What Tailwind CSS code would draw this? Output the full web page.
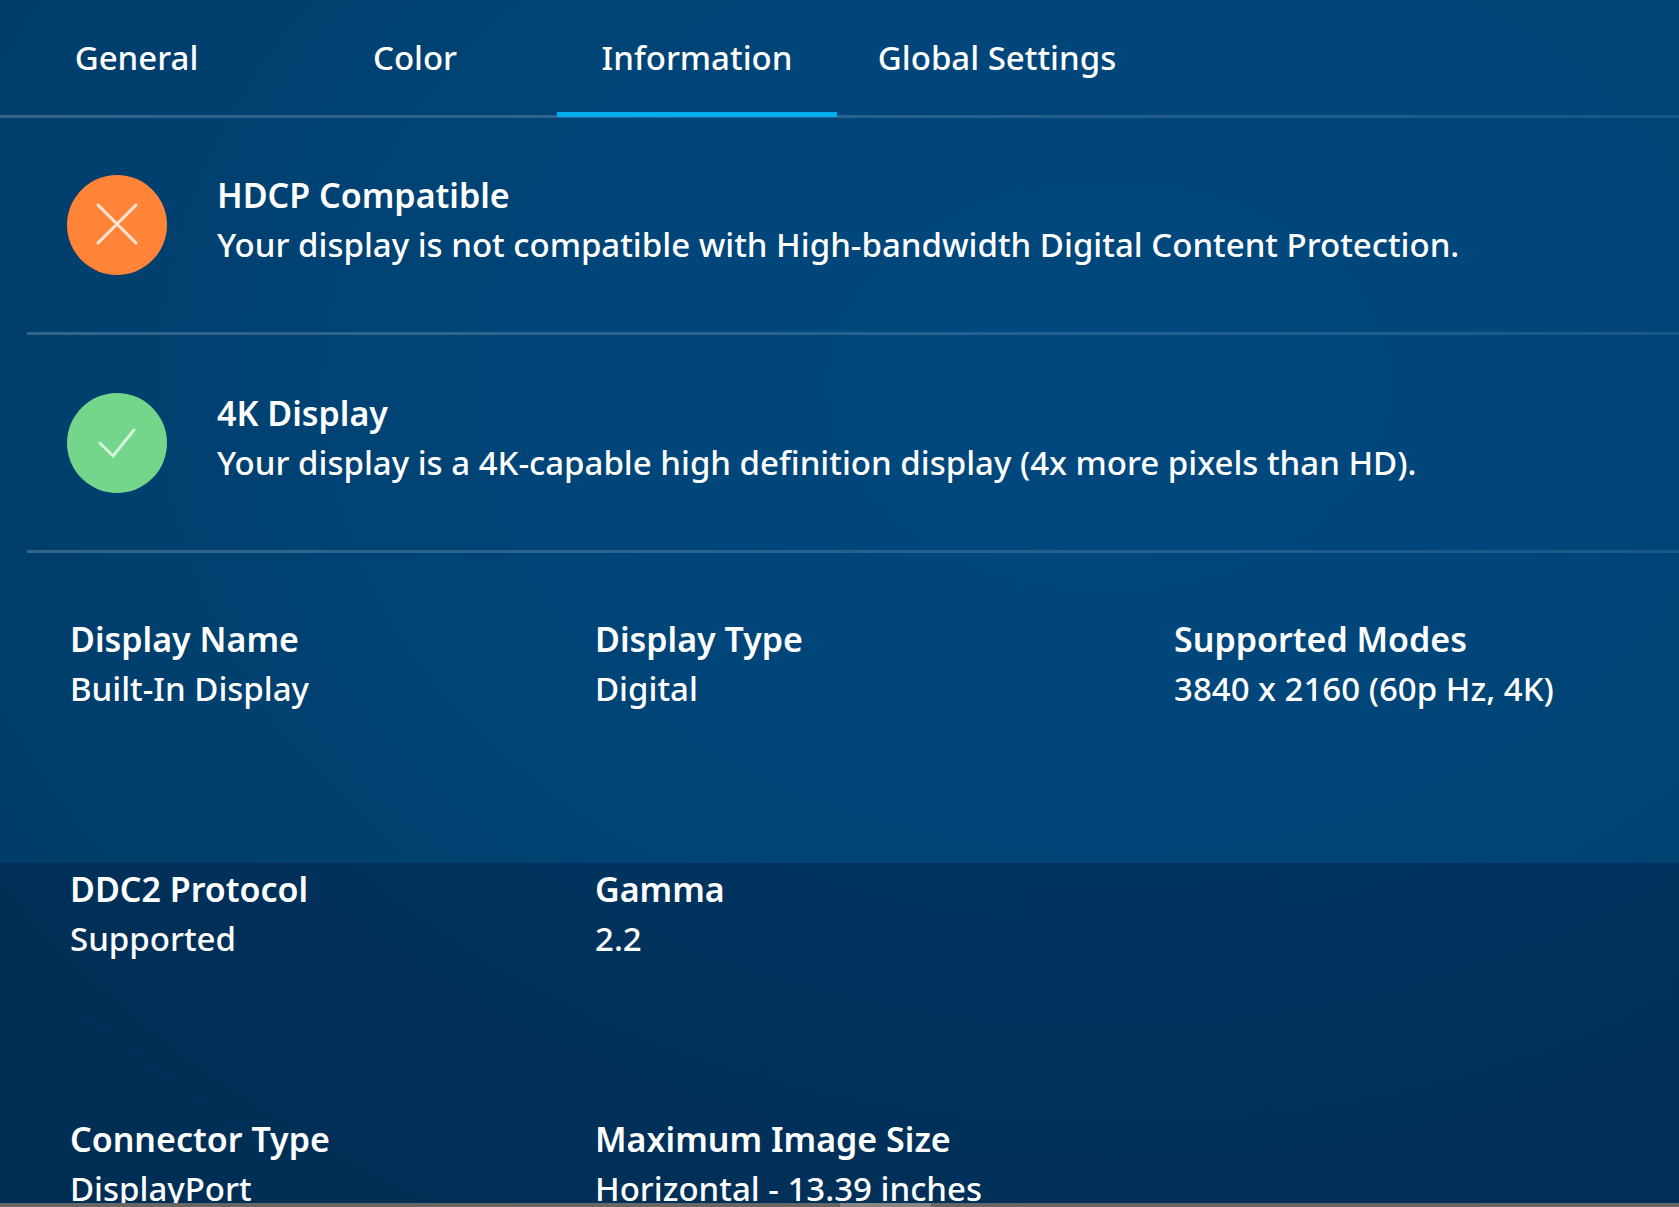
<!DOCTYPE html>
<html lang="en">
  <head>
    <meta charset="UTF-8" />
    <meta name="viewport" content="width=device-width, initial-scale=1.0" />
    <title>Display Information</title>
    <script src="https://cdn.jsdelivr.net/npm/@tailwindcss/browser@4"></script>
  </head>
  <body
    class="h-screen flex flex-col overflow-hidden font-['Noto_Sans','Open_Sans',sans-serif] font-medium text-[33px] leading-[50px] text-white whitespace-nowrap"
  >
    <div
      class="flex-1 min-h-0 overflow-hidden bg-[linear-gradient(to_bottom,transparent_863px,rgb(0_0_24/0.23)_863px),radial-gradient(ellipse_at_66%_32%,#00487e_0%,#00467a_30%,#003e6b_75%,#003b66_100%)]"
    >
      <nav
        class="flex h-[118px] border-b-3 [border-image:linear-gradient(to_right,rgb(255_255_255/0.2),rgb(255_255_255/0.1))_1]"
      >
        <a href="#general" class="w-[273px] pt-[33px] text-center">General</a>
        <a href="#color" class="w-[284px] pt-[33px] text-center">Color</a>
        <a
          href="#information"
          aria-current="page"
          class="w-[280px] h-[117px] pt-[33px] text-center border-b-5 border-[#00aeef]"
          >Information</a
        >
        <a href="#global" class="w-[320px] pt-[33px] text-center"
          >Global Settings</a
        >
      </nav>

      <main>
        <section
          class="ml-[27px] pl-10 h-[217px] flex items-center gap-[50px] border-b-3 [border-image:linear-gradient(to_right,rgb(255_255_255/0.2),rgb(255_255_255/0.1))_1]"
        >
          <svg class="size-[100px] shrink-0" viewBox="0 0 100 100" fill="none">
            <circle cx="50" cy="50" r="50" fill="#ff8438" />
            <path
              d="M31 30L69 68M69 30L31 68"
              stroke="#ffe6d8"
              stroke-width="3"
              stroke-linecap="round"
            />
          </svg>
          <div class="pb-[10px]">
            <h2 class="text-[34px] font-semibold">HDCP Compatible</h2>
            <p>
              Your display is not compatible with High-bandwidth Digital Content
              Protection.
            </p>
          </div>
        </section>

        <section
          class="ml-[27px] pl-10 h-[218px] flex items-center gap-[50px] border-b-3 [border-image:linear-gradient(to_right,rgb(255_255_255/0.2),rgb(255_255_255/0.1))_1]"
        >
          <svg class="size-[100px] shrink-0" viewBox="0 0 100 100" fill="none">
            <circle cx="50" cy="50" r="50" fill="#74d68a" />
            <path
              d="M33 50L46 63L67 37"
              stroke="#d5f3dc"
              stroke-width="3"
              stroke-linecap="round"
            />
          </svg>
          <div class="pb-[10px]">
            <h2 class="text-[34px] font-semibold">4K Display</h2>
            <p>
              Your display is a 4K-capable high definition display (4x more
              pixels than HD).
            </p>
          </div>
        </section>

        <dl
          class="grid grid-cols-[525fr_579fr_505fr] gap-y-[150px] pl-[70px] pt-[61px]"
        >
          <div>
            <dt class="text-[34px] font-semibold">Display Name</dt>
            <dd>Built-In Display</dd>
          </div>
          <div>
            <dt class="text-[34px] font-semibold">Display Type</dt>
            <dd>Digital</dd>
          </div>
          <div>
            <dt class="text-[34px] font-semibold">Supported Modes</dt>
            <dd>3840 x 2160 (60p Hz, 4K)</dd>
          </div>
          <div>
            <dt class="text-[34px] font-semibold">DDC2 Protocol</dt>
            <dd>Supported</dd>
          </div>
          <div class="col-span-2">
            <dt class="text-[34px] font-semibold">Gamma</dt>
            <dd>2.2</dd>
          </div>
          <div>
            <dt class="text-[34px] font-semibold">Connector Type</dt>
            <dd>DisplayPort</dd>
          </div>
          <div class="col-span-2">
            <dt class="text-[34px] font-semibold">Maximum Image Size</dt>
            <dd>Horizontal - 13.39 inches</dd>
          </div>
        </dl>
      </main>
    </div>

    <footer class="flex h-1 shrink-0 bg-[#666666]">
      <div class="ml-[50%] w-[91px] bg-[#858585]"></div>
    </footer>
  </body>
</html>
